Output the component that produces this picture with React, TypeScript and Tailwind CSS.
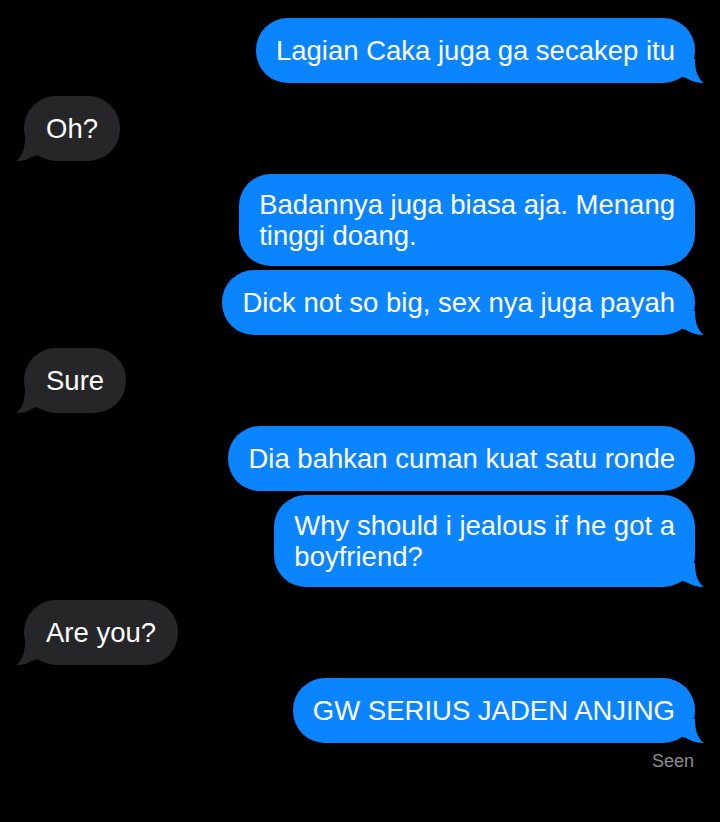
import React from 'react';

type Msg = { from: 'me' | 'them'; lines: string[]; tail?: boolean; gap: 'sm' | 'lg' };

const messages: Msg[] = [
  { from: 'me', lines: ['Lagian Caka juga ga secakep itu'], tail: true, gap: 'lg' },
  { from: 'them', lines: ['Oh?'], tail: true, gap: 'lg' },
  { from: 'me', lines: ['Badannya juga biasa aja. Menang', 'tinggi doang.'], gap: 'lg' },
  { from: 'me', lines: ['Dick not so big, sex nya juga payah'], tail: true, gap: 'sm' },
  { from: 'them', lines: ['Sure'], tail: true, gap: 'lg' },
  { from: 'me', lines: ['Dia bahkan cuman kuat satu ronde'], gap: 'lg' },
  { from: 'me', lines: ['Why should i jealous if he got a', 'boyfriend?'], tail: true, gap: 'sm' },
  { from: 'them', lines: ['Are you?'], tail: true, gap: 'lg' },
  { from: 'me', lines: ['GW SERIUS JADEN ANJING'], tail: true, gap: 'lg' },
];

const Tail = ({ side, color }: { side: 'me' | 'them'; color: string }) => (
  <svg
    width="22"
    height="24"
    viewBox="0 0 22 24"
    className={side === 'me' ? 'absolute bottom-0 -right-[9px]' : 'absolute bottom-0 -left-[8px] -scale-x-100'}
  >
    <path d="M0 0 L13 0 C13 10 15 19 22 24 C15 24 9 22 4 19 C2 18 0 18 0 18 Z" fill={color} />
  </svg>
);

const Bubble = ({ m }: { m: Msg }) => {
  const me = m.from === 'me';
  const color = me ? '#0a84ff' : '#262628';
  const pad = m.lines.length > 1 ? 'py-[15px]' : 'py-[17px]';
  return (
    <div className={`flex ${me ? 'justify-end pr-[25px]' : 'justify-start pl-[24px]'} ${m.gap === 'sm' ? 'mt-[4px]' : 'mt-[13px]'}`}>
      <div
        className={`relative rounded-[32px] ${me ? 'bg-[#0a84ff] px-[20px]' : 'bg-[#262628] px-[22px]'} ${pad} text-white text-[27.5px] leading-[31px] whitespace-nowrap`}
      >
        {m.tail && <Tail side={m.from} color={color} />}
        <span className="relative">
          {m.lines.map((l, i) => (
            <React.Fragment key={i}>
              {i > 0 && <br />}
              {l}
            </React.Fragment>
          ))}
        </span>
      </div>
    </div>
  );
};

export default function App() {
  return (
    <div className="w-[720px] h-[822px] bg-black overflow-hidden pt-[5px]" style={{ fontFamily: '"Liberation Sans", Arial, sans-serif' }}>
      {messages.map((m, i) => (
        <Bubble key={i} m={m} />
      ))}
      <div className="flex justify-end pr-[26px] mt-[5px] text-[18px] leading-[27px] text-[#8e8e93]">Seen</div>
    </div>
  );
}
